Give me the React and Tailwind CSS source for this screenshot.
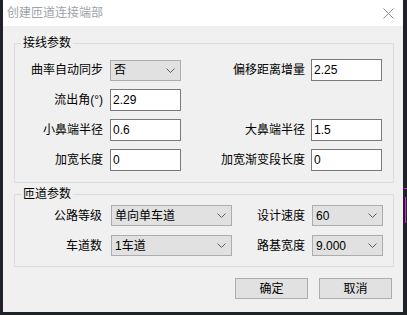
import React from "react";

const font = { fontFamily: '"Liberation Sans", "Noto Sans CJK SC", sans-serif' };

const Chevron = () => (
    <svg width="9" height="5" viewBox="0 0 9 5" className="shrink-0">
        <polyline points="0.5,0.5 4.5,4.5 8.5,0.5" fill="none" stroke="#5f5f5f" strokeWidth="1" />
    </svg>
);

const Combo = ({ value, h = "h-[21px]" }) => (
    <div className={`${h} flex items-center justify-between border border-[#adadad] bg-[#e1e1e1] pl-[3px] pr-[5px] text-[12px] text-black`}>
        <span>{value}</span>
        <Chevron />
    </div>
);

const Field = ({ value }) => (
    <input
        readOnly
        defaultValue={value}
        className="h-[22px] w-full border border-[#7a7a7a] bg-white px-[2px] text-[12px] text-black outline-none"
    />
);

const Label = ({ children, pr = "pr-[7px]" }) => (
    <div className={`text-right text-[12px] text-black ${pr}`}>{children}</div>
);

export default function App() {
    return (
        <div className="flex w-[407px] h-[315px] bg-[#1f2329] overflow-hidden" style={font}>
            <div className="ml-[3px] w-[400px] h-[312px] flex flex-col bg-[#f0f0f0]">
                {/* title bar */}
                <div className="h-[26px] shrink-0 flex items-center justify-between bg-white pl-[4px] pr-[9px]">
                    <span className="text-[12px] text-[#9ca3a9]">创建匝道连接端部</span>
                    <svg width="11" height="11" viewBox="0 0 11 11">
                        <path d="M0.5 0.5 L10.5 10.5 M10.5 0.5 L0.5 10.5" stroke="#8a8a8a" strokeWidth="1" />
                    </svg>
                </div>

                {/* 接线参数 */}
                <fieldset className="ml-[11px] w-[380px] mt-[9px] border border-[#dcdcdc] pt-[8px] pb-[11px]">
                    <legend className="ml-[6px] px-[2px] text-[12px] leading-[16px] text-black">接线参数</legend>
                    <div className="grid grid-cols-[95px_71px_130px_71px] auto-rows-[22px] gap-y-[8px] items-center">
                        <Label>曲率自动同步</Label>
                        <Combo value="否" h="h-[21px]" />
                        <Label pr="pr-[6px]">偏移距离增量</Label>
                        <Field value="2.25" />

                        <Label>流出角(°)</Label>
                        <Field value="2.29" />
                        <div />
                        <div />

                        <Label>小鼻端半径</Label>
                        <Field value="0.6" />
                        <Label pr="pr-[6px]">大鼻端半径</Label>
                        <Field value="1.5" />

                        <Label>加宽长度</Label>
                        <Field value="0" />
                        <Label pr="pr-[6px]">加宽渐变段长度</Label>
                        <Field value="0" />
                    </div>
                </fieldset>

                {/* 匝道参数 */}
                <fieldset className="ml-[11px] w-[380px] mt-[3px] border border-[#dcdcdc] pt-[3px] pb-[10px]">
                    <legend className="ml-[6px] px-[2px] text-[12px] leading-[16px] text-black">匝道参数</legend>
                    <div className="grid grid-cols-[96px_121px_80px_71px] auto-rows-[21px] gap-y-[9px] items-center">
                        <Label pr="pr-[9px]">公路等级</Label>
                        <Combo value="单向单车道" />
                        <Label>设计速度</Label>
                        <Combo value="60" />

                        <Label pr="pr-[9px]">车道数</Label>
                        <Combo value="1车道" />
                        <Label>路基宽度</Label>
                        <Combo value="9.000" />
                    </div>
                </fieldset>

                {/* buttons */}
                <div className="mt-[11px] flex justify-end gap-[11px] pr-[11px]">
                    <button className="h-[21px] w-[73px] border border-[#adadad] bg-[#e1e1e1] text-[12px] text-black">确定</button>
                    <button className="h-[21px] w-[73px] border border-[#adadad] bg-[#e1e1e1] text-[12px] text-black">取消</button>
                </div>
            </div>

            {/* background drawing fragment */}
            <div className="flex-1 flex flex-col items-start">
                <div className="mt-[188px] ml-[1px] h-px w-[3px] bg-[#e020e0]" />
                <div className="mt-[8px] ml-[2px] h-[26px] w-px bg-[#e020e0]" />
            </div>
        </div>
    );
}
